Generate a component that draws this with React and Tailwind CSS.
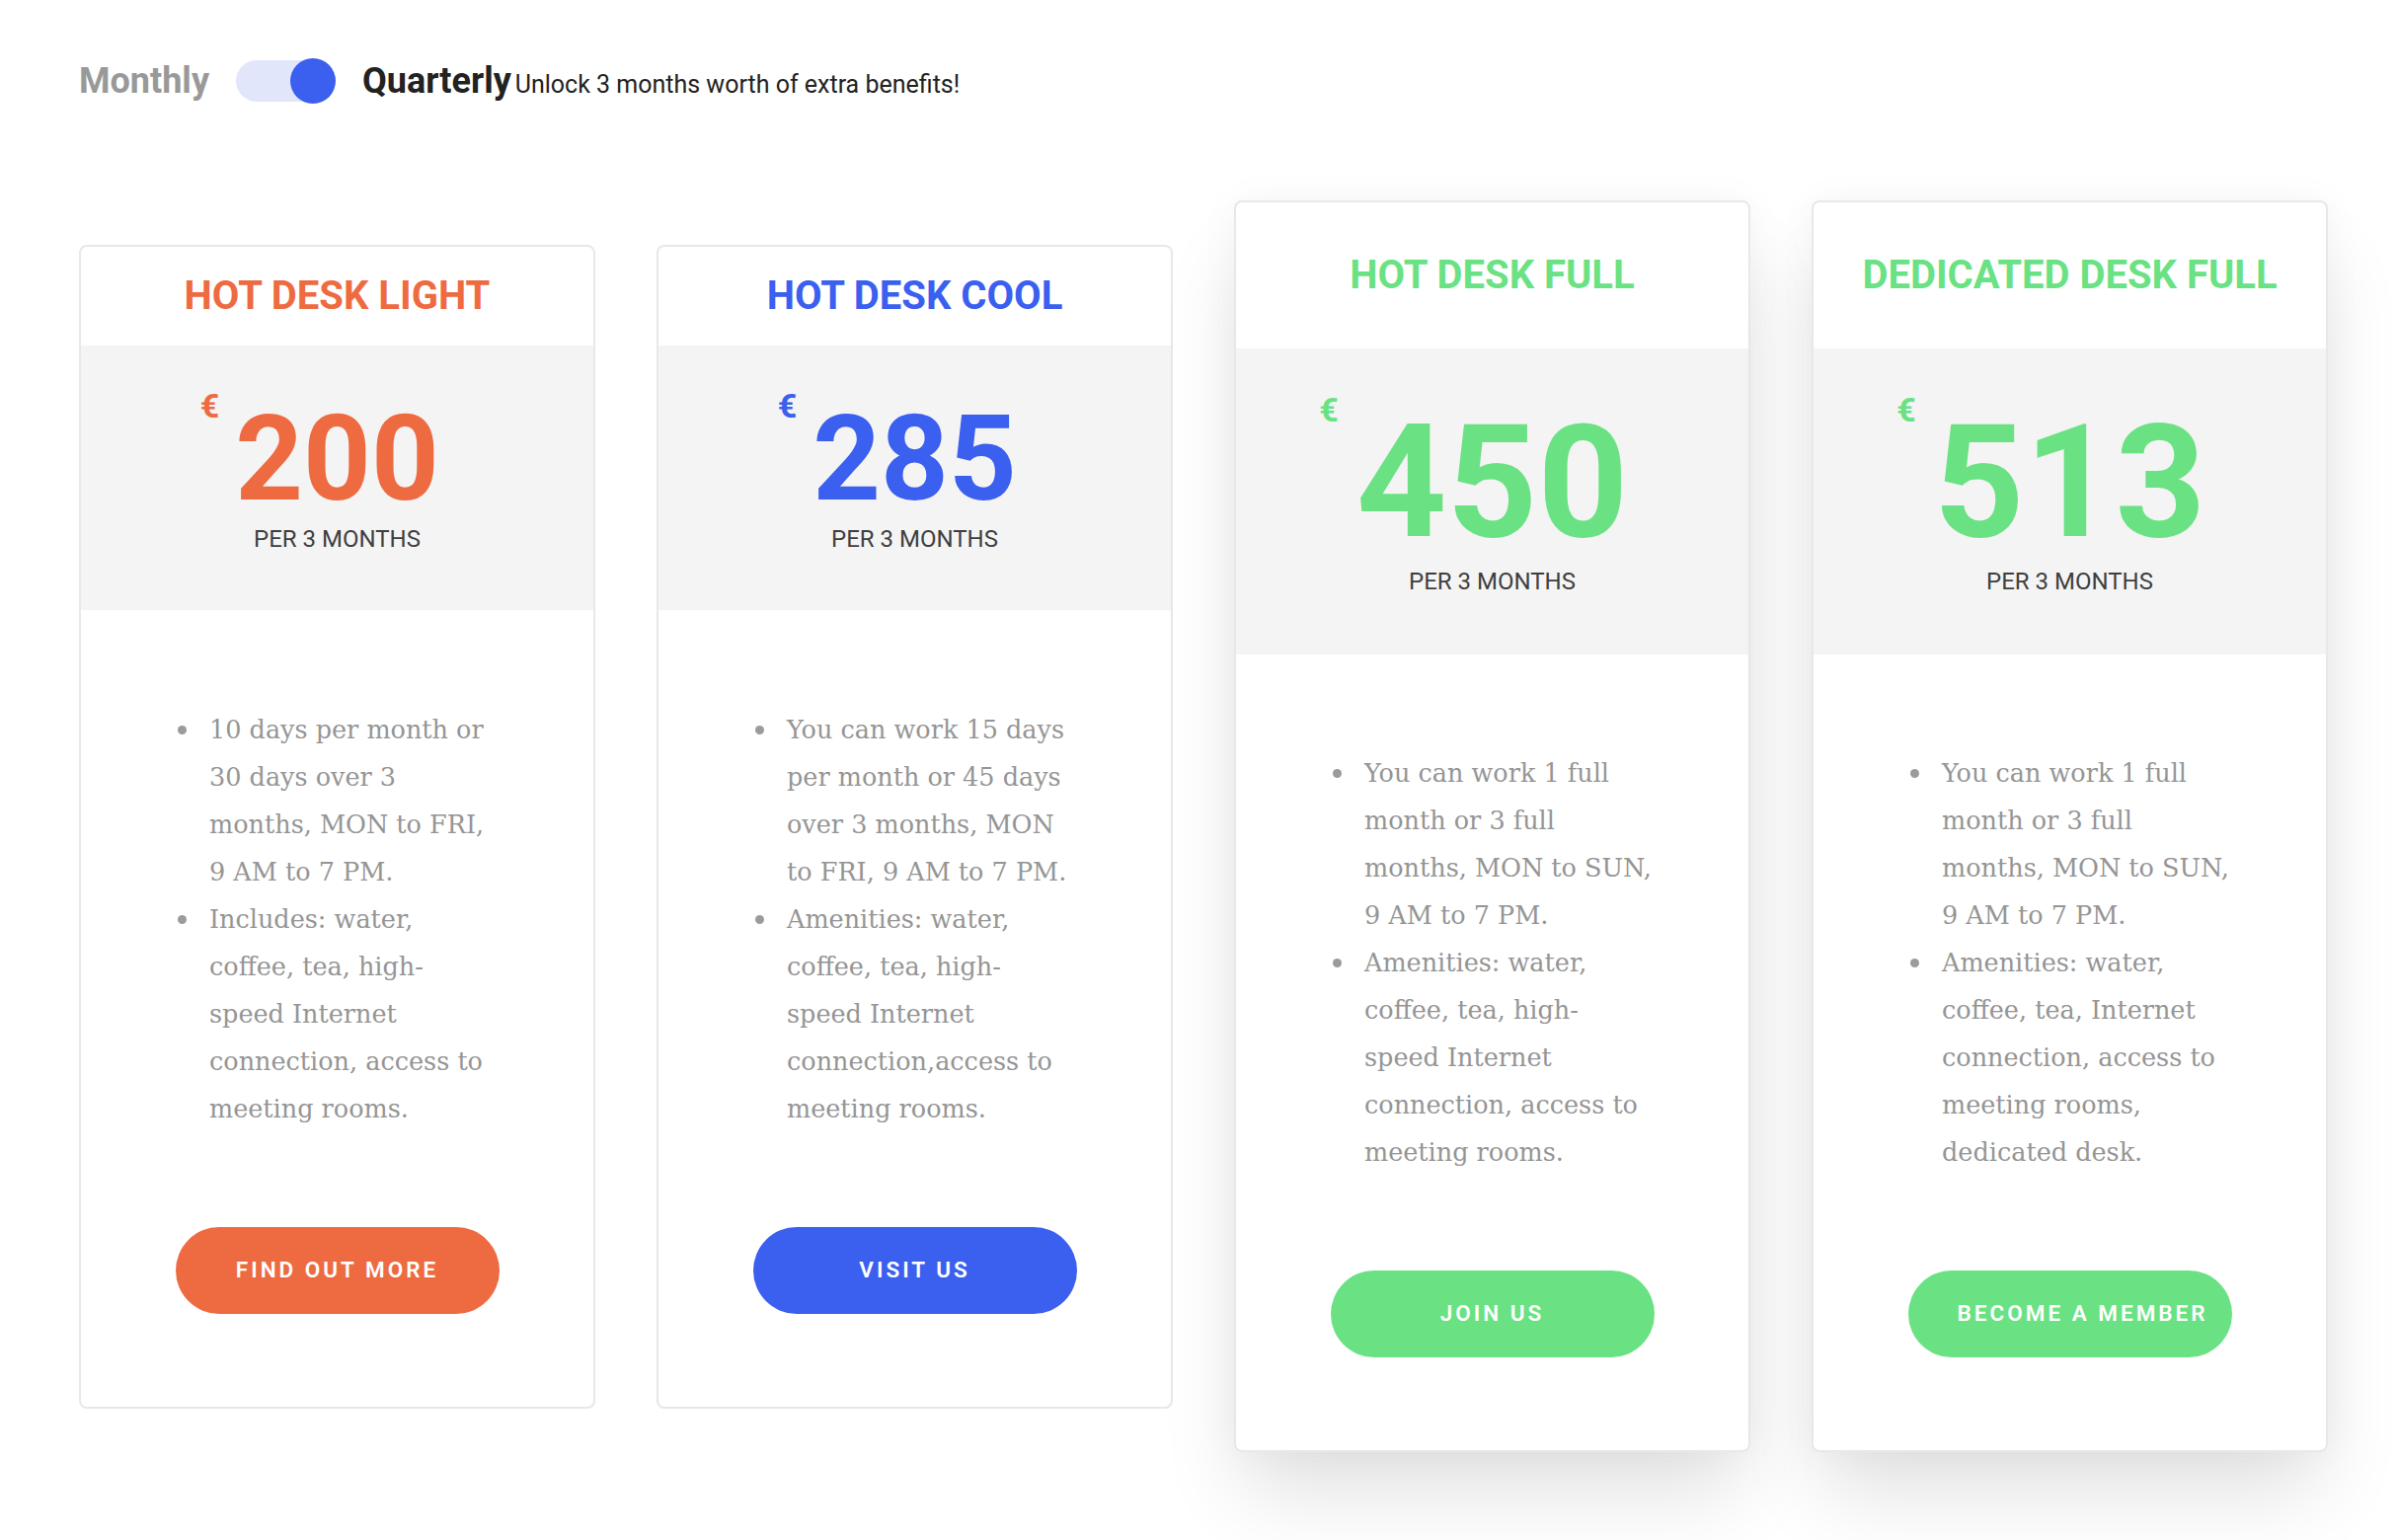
import React from "react";

const plans = [
  {
    title: "HOT DESK LIGHT",
    price: "200",
    color: "text-[#ee6b41]",
    bg: "bg-[#ee6b41]",
    featured: false,
    button: "FIND OUT MORE",
    items: [
      ["10 days per month or", "30 days over 3", "months, MON to FRI,", "9 AM to 7 PM."],
      ["Includes: water,", "coffee, tea, high-", "speed Internet", "connection, access to", "meeting rooms."],
    ],
  },
  {
    title: "HOT DESK COOL",
    price: "285",
    color: "text-[#3b5fef]",
    bg: "bg-[#3b5fef]",
    featured: false,
    button: "VISIT US",
    items: [
      ["You can work 15 days", "per month or 45 days", "over 3 months, MON", "to FRI, 9 AM to 7 PM."],
      ["Amenities: water,", "coffee, tea, high-", "speed Internet", "connection,access to", "meeting rooms."],
    ],
  },
  {
    title: "HOT DESK FULL",
    price: "450",
    color: "text-[#6ae283]",
    bg: "bg-[#6ae283]",
    featured: true,
    button: "JOIN US",
    items: [
      ["You can work 1 full", "month or 3 full", "months, MON to SUN,", "9 AM to 7 PM."],
      ["Amenities: water,", "coffee, tea, high-", "speed Internet", "connection, access to", "meeting rooms."],
    ],
  },
  {
    title: "DEDICATED DESK FULL",
    price: "513",
    color: "text-[#6ae283]",
    bg: "bg-[#6ae283]",
    featured: true,
    button: "BECOME A MEMBER",
    items: [
      ["You can work 1 full", "month or 3 full", "months, MON to SUN,", "9 AM to 7 PM."],
      ["Amenities: water,", "coffee, tea, Internet", "connection, access to", "meeting rooms,", "dedicated desk."],
    ],
  },
];

function Card({ plan }) {
  const f = plan.featured;
  return (
    <div
      className={
        "flex flex-col rounded-lg border-2 border-[#e8e8e8] bg-white " +
        (f ? "shadow-[0_50px_80px_-10px_rgba(0,0,0,0.12),0_0_40px_rgba(0,0,0,0.04)]" : "")
      }
    >
      <div className={"flex items-center justify-center " + (f ? "h-[148px]" : "h-[100px]")}>
        <h2 className={"text-[40px] leading-none font-bold " + plan.color}>{plan.title}</h2>
      </div>
      <div className={"flex flex-col items-center bg-[#f4f4f4] " + (f ? "h-[310px] pt-[56px]" : "h-[268px] pt-[55px]")}>
        <div className="relative">
          <span
            className={
              "absolute top-[-11px] text-[34px] leading-none font-bold " +
              plan.color +
              (f ? " right-[calc(100%+18px)]" : " right-[calc(100%+16px)]")
            }
          >
            €
          </span>
          <span className={"block leading-none font-bold " + plan.color + (f ? " text-[160px]" : " text-[120px]")}>
            {plan.price}
          </span>
        </div>
        <div className={"text-[24px] leading-none text-[#3f3f3f] " + (f ? "mt-[8px]" : "mt-[9px]")}>PER 3 MONTHS</div>
      </div>
      <div className={"flex flex-col items-center px-[98px] pb-[94px] " + (f ? "pt-[96px]" : "pt-[97px]")}>
        <ul className="w-full self-stretch">
          {plan.items.map((lines, i) => (
            <li key={i} className="flex">
              <span className="mt-[20px] h-[9px] w-[9px] shrink-0 rounded-full bg-[#9b9b9b]" />
              <span className="ml-[23px] whitespace-nowrap text-[25.5px] leading-[48px] text-[#959595] [font-family:'DejaVu_Serif',serif]">
                {lines.map((l, j) => (
                  <React.Fragment key={j}>
                    {l}
                    {j < lines.length - 1 && <br />}
                  </React.Fragment>
                ))}
              </span>
            </li>
          ))}
        </ul>
        <button
          className={
            "mt-[96px] block h-[88px] w-[328px] overflow-visible whitespace-nowrap rounded-full px-[50px] text-center text-[22.5px] font-semibold tracking-[3px] text-white " +
            plan.bg
          }
        >
          {plan.button}
        </button>
      </div>
    </div>
  );
}

export default function App() {
  return (
    <div className="min-h-[1560px] bg-white px-[80px] pt-[59px] pb-[80px] [font-family:Roboto,'Liberation_Sans',sans-serif]">
      <div className="flex h-[46px] items-center">
        <span className="text-[36px] leading-none font-bold text-[#999999]">Monthly</span>
        <div className="relative ml-[27px] h-[46px] w-[101px]">
          <div className="absolute left-0 top-[2px] h-[42px] w-[92px] rounded-full bg-[#e1e6fb]" />
          <div className="absolute right-0 top-0 h-[46px] w-[46px] rounded-full bg-[#3b5fef]" />
        </div>
        <span className="ml-[27px] leading-none text-[#222222]">
          <span className="text-[36px] font-bold">Quarterly</span>{" "}
          <span className="text-[25px]">Unlock 3 months worth of extra benefits!</span>
        </span>
      </div>
      <div className="mt-[98px] grid grid-cols-[repeat(4,523px)] items-center gap-[62px]">
        {plans.map((p) => (
          <Card key={p.title} plan={p} />
        ))}
      </div>
    </div>
  );
}
